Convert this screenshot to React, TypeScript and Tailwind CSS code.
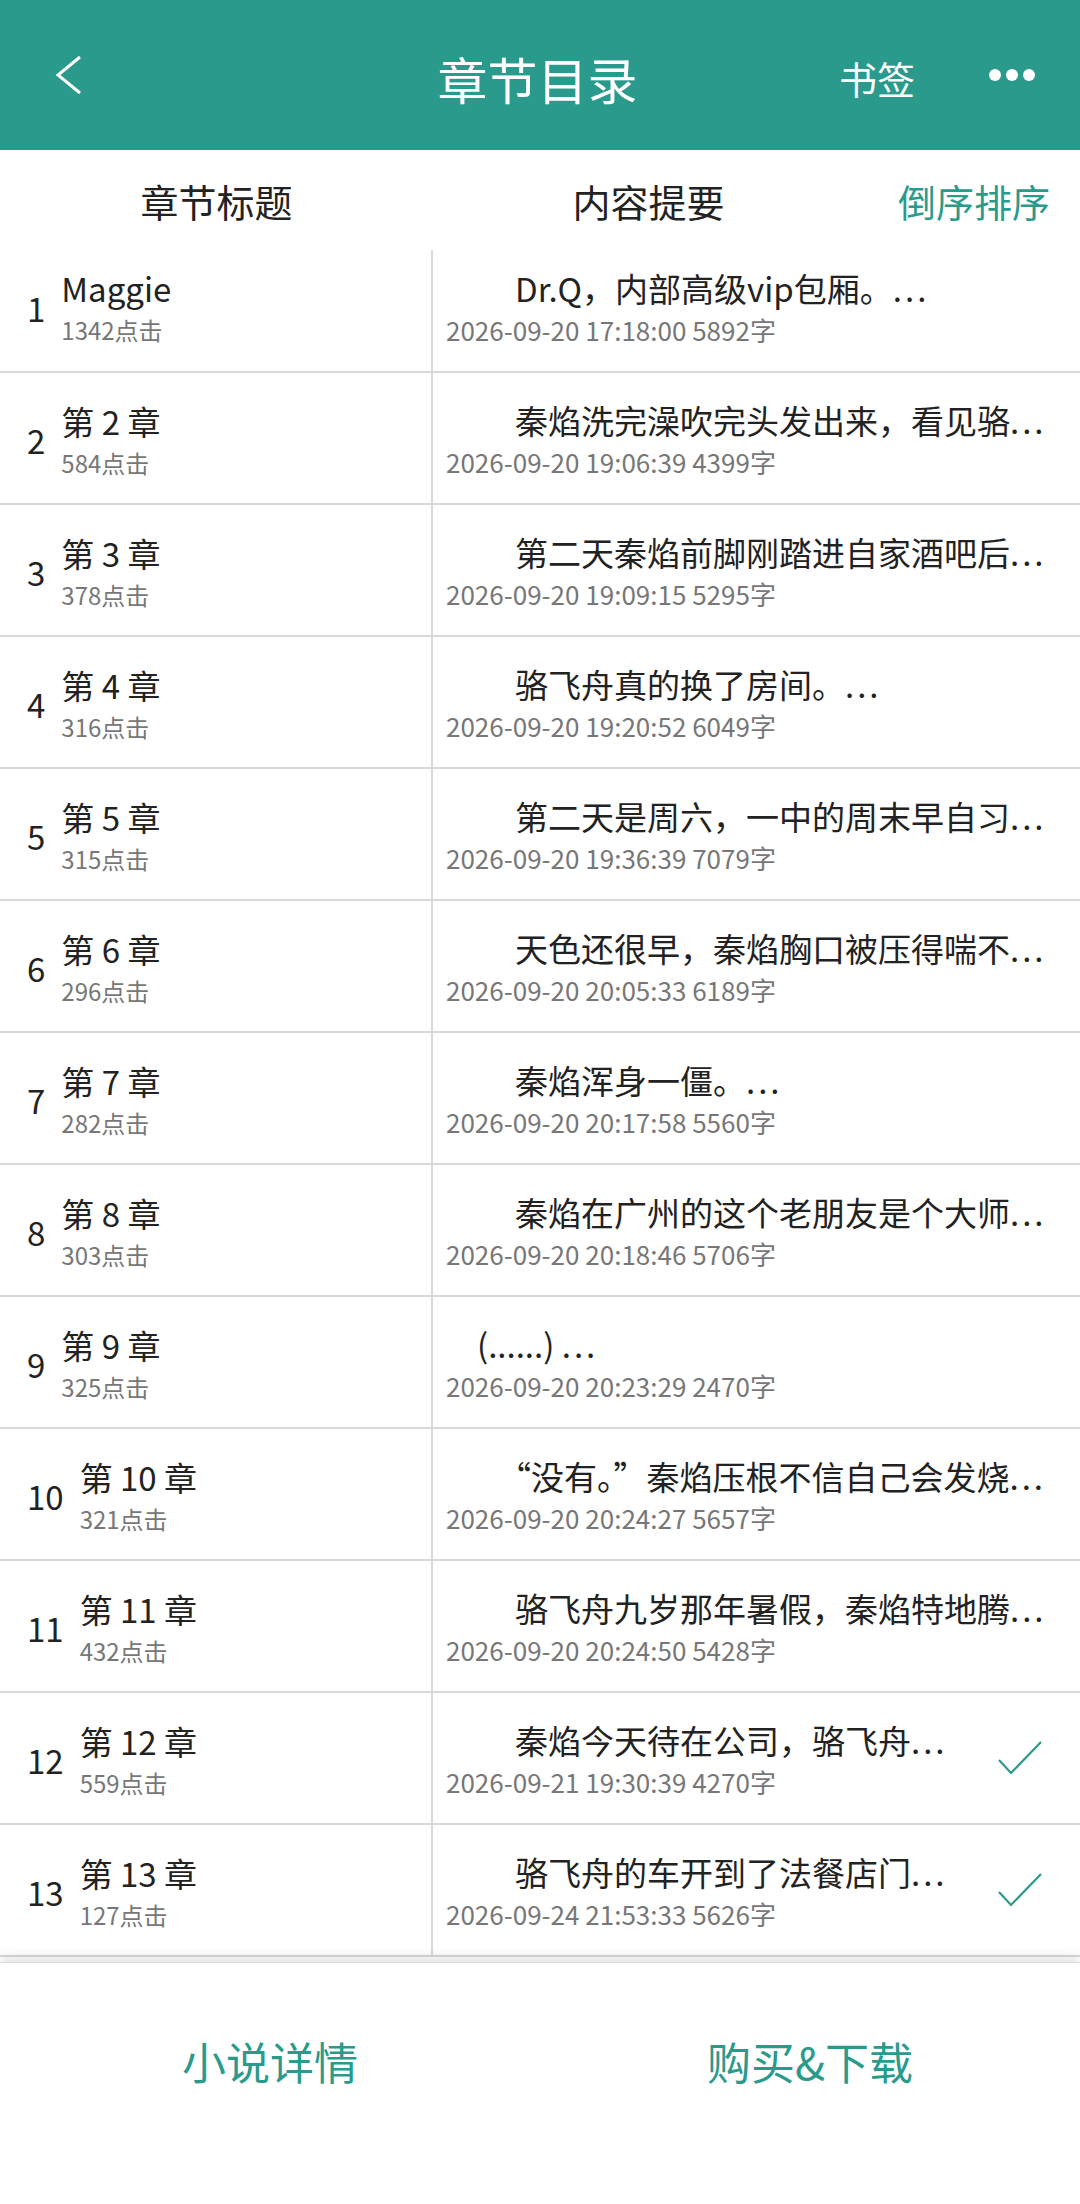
import React from "react";

type Chapter = {
  no: number;
  title: string;
  clicks: number;
  summary: string;
  time: string;
  words: number;
  read?: boolean;
  indent?: string;
};

const chapters: Chapter[] = [
  { no: 1, title: "Maggie", clicks: 1342, summary: "Dr.Q，内部高级vip包厢。", time: "2026-09-20 17:18:00", words: 5892 },
  { no: 2, title: "第 2 章", clicks: 584, summary: "秦焰洗完澡吹完头发出来，看见骆", time: "2026-09-20 19:06:39", words: 4399 },
  { no: 3, title: "第 3 章", clicks: 378, summary: "第二天秦焰前脚刚踏进自家酒吧后", time: "2026-09-20 19:09:15", words: 5295 },
  { no: 4, title: "第 4 章", clicks: 316, summary: "骆飞舟真的换了房间。", time: "2026-09-20 19:20:52", words: 6049 },
  { no: 5, title: "第 5 章", clicks: 315, summary: "第二天是周六，一中的周末早自习", time: "2026-09-20 19:36:39", words: 7079 },
  { no: 6, title: "第 6 章", clicks: 296, summary: "天色还很早，秦焰胸口被压得喘不", time: "2026-09-20 20:05:33", words: 6189 },
  { no: 7, title: "第 7 章", clicks: 282, summary: "秦焰浑身一僵。", time: "2026-09-20 20:17:58", words: 5560 },
  { no: 8, title: "第 8 章", clicks: 303, summary: "秦焰在广州的这个老朋友是个大师", time: "2026-09-20 20:18:46", words: 5706 },
  { no: 9, title: "第 9 章", clicks: 325, summary: "(......) ", time: "2026-09-20 20:23:29", words: 2470, indent: "pl-[31px]" },
  { no: 10, title: "第 10 章", clicks: 321, summary: "“没有。”秦焰压根不信自己会发烧", time: "2026-09-20 20:24:27", words: 5657, indent: "pl-[52px]" },
  { no: 11, title: "第 11 章", clicks: 432, summary: "骆飞舟九岁那年暑假，秦焰特地腾", time: "2026-09-20 20:24:50", words: 5428 },
  { no: 12, title: "第 12 章", clicks: 559, summary: "秦焰今天待在公司，骆飞舟", time: "2026-09-21 19:30:39", words: 4270, read: true },
  { no: 13, title: "第 13 章", clicks: 127, summary: "骆飞舟的车开到了法餐店门", time: "2026-09-24 21:53:33", words: 5626, read: true },
];

function ChapterRow({ c, first }: { c: Chapter; first: boolean }) {
  return (
    <div
      className={`flex border-b-2 border-[#d9d9d9] ${first ? "h-[123px]" : "h-[132px]"}`}
    >
      {/* left column: number + title */}
      <div
        className={`w-[433px] shrink-0 flex items-center pl-[27px] border-r-2 border-[#d9d9d9] ${first ? "pb-[10px]" : ""}`}
      >
        <span className="text-[33px] text-[#222] mr-[16px] mt-[6px]">{c.no}</span>
        <div className="flex flex-col">
          <span className="text-[33px] leading-[48px] text-[#222]">{c.title}</span>
          <span className="text-[24px] leading-[35px] text-[#777]">{c.clicks}点击</span>
        </div>
      </div>
      {/* right column: summary */}
      <div className={`flex-1 min-w-0 flex items-center pl-[13px] pr-[20px] ${first ? "pb-[10px]" : ""}`}>
        <div className="flex-1 min-w-0 flex flex-col">
          <span
            className={`text-[33px] leading-[48px] text-[#222] whitespace-nowrap ${c.indent ?? "pl-[69px]"}`}
          >
            {c.summary}
            <span className="tracking-[3px]">...</span>
          </span>
          <span className="text-[26px] leading-[36px] text-[#777] whitespace-nowrap">
            {c.time} {c.words}字
          </span>
        </div>
        {c.read && (
          <svg width="48" height="40" viewBox="0 0 48 40" className="shrink-0 mr-[16px] ml-[12px]">
            <path d="M3 22 L15 35 L45 4" fill="none" stroke="#2a9a8b" strokeWidth="2.2" />
          </svg>
        )}
      </div>
    </div>
  );
}

export default function App() {
  return (
    <div
      className="w-[1080px] h-[2204px] bg-white flex flex-col overflow-hidden"
      style={{ fontFamily: '"Noto Sans CJK SC", "Noto Sans", sans-serif' }}
    >
      {/* top bar */}
      <div className="h-[150px] shrink-0 bg-[#299a8b] flex items-center text-white">
        <div className="w-[120px] flex items-center pl-[52px]">
          <svg width="34" height="44" viewBox="0 0 34 44">
            <path d="M28 4 L6 22 L28 40" fill="none" stroke="white" strokeWidth="3" strokeLinejoin="miter" />
          </svg>
        </div>
        <div className="flex-1 flex justify-center pl-[116px]">
          <span className="text-[50px] leading-none mt-[6px]">章节目录</span>
        </div>
        <span className="text-[38px] leading-none mt-[6px] mr-[74px]">书签</span>
        <div className="flex items-center gap-[5px] mr-[45px]">
          <span className="w-[12px] h-[12px] rounded-full bg-white" />
          <span className="w-[12px] h-[12px] rounded-full bg-white" />
          <span className="w-[12px] h-[12px] rounded-full bg-white" />
        </div>
      </div>

      {/* column headers */}
      <div className="h-[100px] shrink-0 flex items-center">
        <div className="w-[433px] text-center text-[38px] text-[#222]">章节标题</div>
        <div className="flex-1 text-center text-[38px] text-[#222]">内容提要</div>
        <div className="w-[216px] text-right pr-[30px] text-[38px] text-[#2a9a8b]">倒序排序</div>
      </div>

      {/* chapter list */}
      <div className="flex-1 min-h-0 flex flex-col overflow-hidden">
        {chapters.map((c, i) => (
          <ChapterRow key={c.no} c={c} first={i === 0} />
        ))}
      </div>

      {/* bottom bar */}
      <div className="h-[242px] shrink-0 flex items-start pt-[72px] bg-white shadow-[0_-6px_10px_rgba(0,0,0,0.10)] border-t border-[#dedede] relative">
        <div className="flex-1 text-center text-[44px] leading-[52px] text-[#2a9a8b]">小说详情</div>
        <div className="flex-1 text-center text-[44px] leading-[52px] text-[#2a9a8b]">购买&amp;下载</div>
      </div>
    </div>
  );
}
